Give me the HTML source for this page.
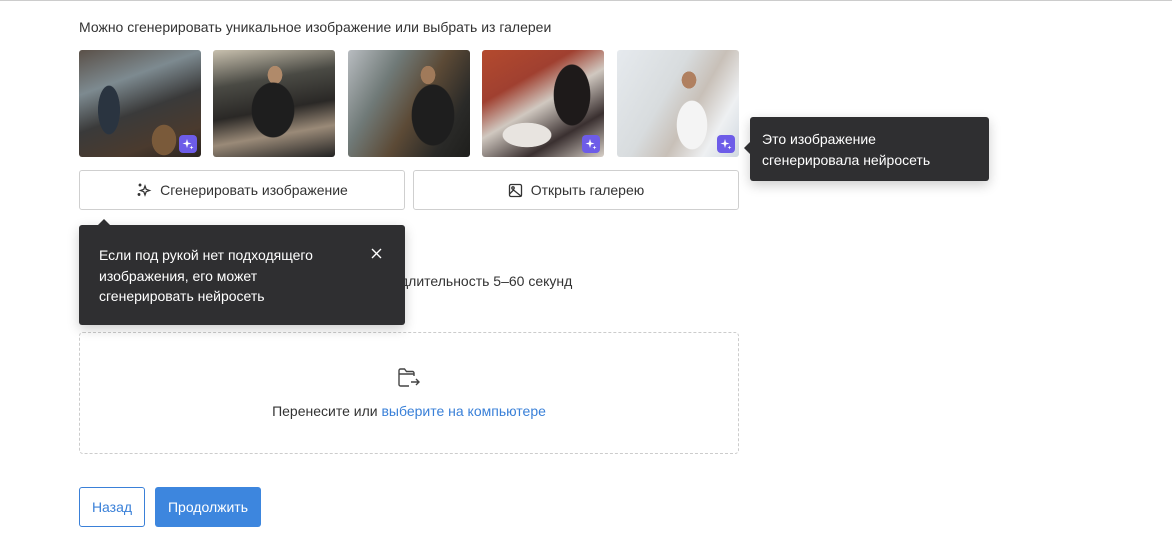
<!DOCTYPE html>
<html><head><meta charset="utf-8"><style>
*{box-sizing:border-box;margin:0;padding:0}
body{width:1172px;height:544px;background:#fff;font-family:"Liberation Sans",Arial,sans-serif;position:relative;overflow:hidden;color:#333}
.abs{position:absolute}
.img{position:absolute;top:50px;width:122px;height:107px;border-radius:3px;overflow:hidden}
.badge{position:absolute;right:4px;bottom:4px;width:18px;height:18px;border-radius:4px;background:#6d5ce8;display:flex;align-items:center;justify-content:center}
.btn{position:absolute;top:170px;height:40px;width:326px;border:1px solid #cfcfcf;border-radius:3px;display:flex;align-items:center;justify-content:center;font-size:14px;color:#333;gap:8px}
.tip{position:absolute;background:#2f2f31;color:#fff;border-radius:3px;box-shadow:0 4px 12px rgba(0,0,0,.2);font-size:14px;line-height:20.5px}
</style></head><body>
<div class="abs" style="left:0;top:0;width:1172px;height:1px;background:#ccc"></div>
<div class="abs" style="left:79px;top:19px;font-size:14px;color:#333">Можно сгенерировать уникальное изображение или выбрать из галереи</div>

<div class="img" style="left:79px;background:radial-gradient(ellipse 18px 40px at 30px 60px,#2a3440 60%,transparent 62%),radial-gradient(ellipse 20px 25px at 85px 90px,#7a5a3a 60%,transparent 62%),linear-gradient(160deg,#5a5048 0%,#7d8a90 30%,#3a3a3a 55%,#4a3a2e 80%,#2a2420)"><div class="badge"><svg width="12" height="12" viewBox="0 0 12 12"><path d="M5 1L6 4.5 9.5 5.5 6 6.5 5 10 4 6.5 .5 5.5 4 4.5Z M9.5 7.5l.5 1.5 1.5.5-1.5.5-.5 1.5-.5-1.5-1.5-.5 1.5-.5z" fill="#fff"/></svg></div></div>
<div class="img" style="left:213px;background:radial-gradient(ellipse 35px 45px at 60px 60px,#1e1e1e 60%,transparent 62%),radial-gradient(ellipse 12px 15px at 62px 25px,#b08a6a 60%,transparent 62%),linear-gradient(170deg,#c8c0ae 0%,#4a4a44 30%,#2a2826 55%,#9a8a78 75%,#222 100%)"></div>
<div class="img" style="left:348px;background:radial-gradient(ellipse 35px 50px at 85px 65px,#1e1e1e 60%,transparent 62%),radial-gradient(ellipse 12px 15px at 80px 25px,#a07a5a 60%,transparent 62%),linear-gradient(120deg,#b8bcc0 0%,#707a78 30%,#5c4a36 55%,#2a2a28 80%,#1e1e1c)"></div>
<div class="img" style="left:482px;background:radial-gradient(ellipse 30px 50px at 90px 45px,#1e1a1a 60%,transparent 62%),radial-gradient(ellipse 40px 20px at 45px 85px,#e8e4e0 60%,transparent 62%),linear-gradient(150deg,#b44a2e 0%,#a04030 30%,#d0c8c0 50%,#3a3030 75%,#d8d0c8)"><div class="badge"><svg width="12" height="12" viewBox="0 0 12 12"><path d="M5 1L6 4.5 9.5 5.5 6 6.5 5 10 4 6.5 .5 5.5 4 4.5Z M9.5 7.5l.5 1.5 1.5.5-1.5.5-.5 1.5-.5-1.5-1.5-.5 1.5-.5z" fill="#fff"/></svg></div></div>
<div class="img" style="left:617px;background:radial-gradient(ellipse 25px 40px at 75px 75px,#f4f4f4 60%,transparent 62%),radial-gradient(ellipse 12px 14px at 72px 30px,#b08060 60%,transparent 62%),linear-gradient(120deg,#e6eaee 0%,#d8dcde 40%,#c8c0b8 60%,#eef0f2 80%,#d0d8e0)"><div class="badge"><svg width="12" height="12" viewBox="0 0 12 12"><path d="M5 1L6 4.5 9.5 5.5 6 6.5 5 10 4 6.5 .5 5.5 4 4.5Z M9.5 7.5l.5 1.5 1.5.5-1.5.5-.5 1.5-.5-1.5-1.5-.5 1.5-.5z" fill="#fff"/></svg></div></div>

<div class="btn" style="left:79px"><svg width="16" height="16" viewBox="0 0 16 16" fill="none" stroke="#333" stroke-width="1.3"><path d="M9 4l1.2 3.3L13.5 8.5 10.2 9.7 9 13 7.8 9.7 4.5 8.5 7.8 7.3Z"/><circle cx="4" cy="3" r=".8" fill="#333"/><circle cx="3" cy="12.5" r=".8" fill="#333"/></svg>Сгенерировать изображение</div>
<div class="btn" style="left:413px"><svg width="15" height="15" viewBox="0 0 15 15" fill="none" stroke="#333" stroke-width="1.3"><rect x="1.5" y="1.5" width="12" height="12" rx="1.5"/><circle cx="5" cy="5" r="1.2"/><path d="M1.5 11l4-4 8 6.5"/></svg>Открыть галерею</div>

<div class="tip" style="left:750px;top:117px;width:239px;height:64px;padding:12px 12px">Это изображение<br>сгенерировала нейросеть</div>
<div class="abs" style="left:744px;top:142px;width:0;height:0;border-top:6px solid transparent;border-bottom:6px solid transparent;border-right:6px solid #2f2f31"></div>

<div class="abs" style="left:400px;top:273px;font-size:14px;color:#333;white-space:nowrap">длительность 5–60 секунд</div>

<div class="abs" style="left:79px;top:332px;width:660px;height:122px;border:1px dashed #ccc;border-radius:4px"></div>
<svg class="abs" style="left:397px;top:366px" width="24" height="24" viewBox="0 0 24 24" fill="none" stroke="#444" stroke-width="1.4"><path d="M12 20H3.5A1.5 1.5 0 0 1 2 18.5V4.5A1.5 1.5 0 0 1 3.5 3h4l2 2.5h6A1.5 1.5 0 0 1 17 7v3"/><path d="M2 8h15M14 16h8M19 13l3 3-3 3"/></svg>
<div class="abs" style="left:79px;top:403px;width:660px;text-align:center;font-size:14px;color:#333">Перенесите или <span style="color:#3a80d8">выберите на компьютере</span></div>

<div class="tip" style="left:79px;top:225px;width:326px;height:100px;padding:20px 20px">Если под рукой нет подходящего<br>изображения, его может<br>сгенерировать нейросеть</div>
<div class="abs" style="left:98px;top:219px;width:0;height:0;border-left:6px solid transparent;border-right:6px solid transparent;border-bottom:6px solid #2f2f31"></div>
<svg class="abs" style="left:371px;top:248px" width="11" height="11" viewBox="0 0 11 11" stroke="#fff" stroke-width="1.4"><path d="M1 1l9 9M10 1l-9 9"/></svg>

<div class="abs" style="left:79px;top:487px;width:66px;height:40px;border:1px solid #3a80d8;border-radius:3px;color:#3a80d8;font-size:14px;display:flex;align-items:center;justify-content:center">Назад</div>
<div class="abs" style="left:155px;top:487px;width:106px;height:40px;background:#3d86de;border-radius:3px;color:#fff;font-size:14px;display:flex;align-items:center;justify-content:center">Продолжить</div>
</body></html>
